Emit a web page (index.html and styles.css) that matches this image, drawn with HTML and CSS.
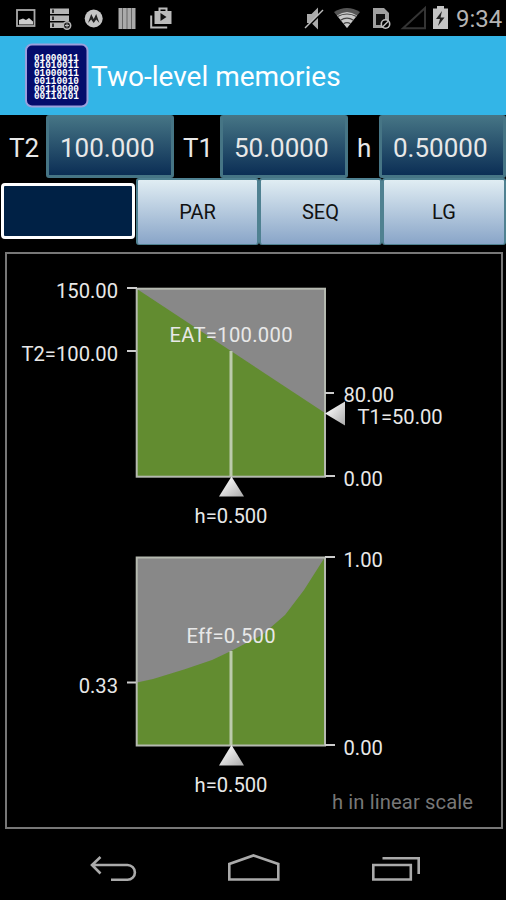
FILE: index.html
```html
<!DOCTYPE html>
<html lang="en">
<head>
    <meta charset="UTF-8">
    <meta name="viewport" content="width=device-width, initial-scale=1.0">
    <title>Two-level memories</title>
    <link rel="stylesheet" href="styles.css">
</head>
<body>
    <div class="status-bar">
        <svg class="status-icons" width="506" height="36" viewBox="0 0 506 36">
            <!-- picture -->
            <rect x="17" y="10" width="17.5" height="16" fill="none" stroke="#aaa" stroke-width="1.8"/>
            <path d="M19 24.500V20l4-1.500 3 1.500 3-2 4 3.500v3z" fill="#ccc"/>
            <!-- storage -->
            <path d="M50 8.500h19v5.500H50zM50 15.500h19V21H50zM50 22.500h14V28H50z" fill="#b5b5b5"/>
            <path d="M53 9.500v3.500M53 16.500V20M53 23.500V27" stroke="#333" stroke-width="2"/>
            <circle cx="67" cy="25.500" r="3.700" fill="#222" stroke="#b5b5b5" stroke-width="1.500"/>
            <path d="M67 23.500v4M65 25.500h4" stroke="#b5b5b5"/>
            <!-- motorola -->
            <circle cx="93.700" cy="18.500" r="9" fill="#c4c4c4"/>
            <path d="M88 23l3.200-9 2.500 5 2.500-5 3.200 9-3.200-3.500-2.500 3.500-2.500-3.500z" fill="#222"/>
            <!-- bars -->
            <path d="M118.500 8h17v21h-17z" fill="#aaa"/>
            <path d="M122.500 8v21M127 8v21M131.500 8v21" stroke="#666"/>
            <!-- play store -->
            <path d="M154.500 11h17v13h-17z" fill="#bbb"/>
            <path d="M159.500 12V8.500h7V12M151.200 15.500v12h16" fill="none" stroke="#bbb" stroke-width="2"/>
            <path d="M160.500 13v8l6-4z" fill="#111"/>
            <!-- muted -->
            <path d="M307 14h4.500l6.500-6.500v22L311.500 23H307z" fill="#aaa"/>
            <path d="M305.500 29l18-18" stroke="#000" stroke-width="2"/>
            <path d="M305 28l18-18" stroke="#bbb" stroke-width="1.500"/>
            <!-- wifi -->
            <path d="M334 12q13-8 26 0L347 28z" fill="#555"/>
            <path d="M337 15.500q10-7 20 0L347 28z" fill="#c8c8c8"/>
            <path d="M337.500 16.500q9.500-5 19 0M340.500 20.200q6.500-4 13 0M343.500 23.700q3.500-2 7 0" fill="none" stroke="#444" stroke-width="1.200"/>
            <!-- no sim -->
            <path d="M373 8h11l5 5v15h-16z" fill="#a0a0a0"/>
            <path d="M376 14h9v11h-9z" fill="#111"/>
            <circle cx="385.500" cy="24" r="4.200" fill="#000" stroke="#c0c0c0" stroke-width="1.600"/>
            <path d="M382.500 27l6-6" stroke="#c0c0c0" stroke-width="1.500"/>
            <!-- signal -->
            <path d="M403 28.200L425 8v20.200z" fill="none" stroke="#343434" stroke-width="2"/>
            <!-- battery -->
            <path d="M433 8.500h4V6h7v2.500h4V29h-15z" fill="#c4c4c4"/>
            <path d="M442 11l-6 8h4l-2 7 6.500-8.500h-4z" fill="#222"/>
            <text class="clock" x="456" y="26.500">9:34</text>
        </svg>
    </div>

    <header class="title-bar">
        <svg class="logo" width="64" height="66" viewBox="0 0 64 66">
            <rect x="1" y="1.500" width="61.500" height="62" rx="6" fill="#040c6c" stroke="#9b9fdc" stroke-width="2"/>
            <g class="bits">
                <text x="9" y="17.500" textLength="45" lengthAdjust="spacingAndGlyphs">01000011</text>
                <text x="9" y="24.800" textLength="45" lengthAdjust="spacingAndGlyphs">01010011</text>
                <text x="9" y="33" textLength="45" lengthAdjust="spacingAndGlyphs">01000011</text>
                <text x="9" y="40.800" textLength="45" lengthAdjust="spacingAndGlyphs">00110010</text>
                <text x="9" y="48.600" textLength="45" lengthAdjust="spacingAndGlyphs">00110000</text>
                <text x="9" y="56.400" textLength="45" lengthAdjust="spacingAndGlyphs">00110101</text>
            </g>
        </svg>
        <h1>Two-level memories</h1>
    </header>

    <div class="inputs">
        <span class="label">T2</span>
        <div class="field">100.000</div>
        <span class="label">T1</span>
        <div class="field">50.0000</div>
        <span class="label">h</span>
        <div class="field">0.50000</div>
    </div>

    <div class="buttons">
        <div class="selected"></div>
        <button type="button">PAR</button>
        <button type="button">SEQ</button>
        <button type="button">LG</button>
    </div>

    <main class="panel">
        <svg class="chart" width="494" height="573" viewBox="7 254 494 573">
            <defs>
                <linearGradient id="knob" x1="0" y1="0" x2="1" y2="1">
                    <stop offset="0.300" stop-color="#eee"/>
                    <stop offset="1" stop-color="#aaa"/>
                </linearGradient>
            </defs>

            <!-- effective access time -->
            <rect x="136.500" y="288.500" width="188.500" height="188.500" fill="#888"/>
            <path d="M137 289L325 413V476H137z" fill="#628c30"/>
            <rect class="frame" x="136.700" y="288.700" width="188.300" height="188"/>
            <path class="needle" d="M231 351V476"/>
            <path class="tick" d="M127 288h10M127 351h9M325 393h9M325 476h10"/>
            <path d="M231.500 476.500l12.500 20h-25z" fill="url(#knob)"/>
            <path d="M325 413.500l20-12v24z" fill="url(#knob)"/>
            <text class="end" x="118" y="297.500">150.00</text>
            <text class="end" x="118" y="360.500">T2=100.00</text>
            <text class="mid" x="231" y="341.500" textLength="123">EAT=100.000</text>
            <text x="343.500" y="402">80.00</text>
            <text x="357.500" y="423.500">T1=50.00</text>
            <text x="343.500" y="485.500">0.00</text>
            <text class="mid" x="231" y="522.500">h=0.500</text>

            <!-- efficiency -->
            <rect x="136.500" y="557.500" width="188.500" height="188.500" fill="#888"/>
            <path d="M137 682.500L153 679 184 669.500 212 660 231 651 262 635 285 615 304 590 325 557V745H137z" fill="#628c30"/>
            <rect class="frame" x="136.700" y="557.500" width="188.300" height="188"/>
            <path class="needle" d="M231 651V745"/>
            <path class="tick" d="M127 682.500h9M325 557h10M325 745h10"/>
            <path d="M231.500 745l12.500 20.500h-25z" fill="url(#knob)"/>
            <text class="end" x="118" y="692.500">0.33</text>
            <text class="mid" x="231" y="642.500" textLength="89">Eff=0.500</text>
            <text x="343.500" y="567">1.00</text>
            <text x="343.500" y="755">0.00</text>
            <text class="mid" x="231" y="791.500">h=0.500</text>

            <text class="note" x="332" y="809" textLength="141">h in linear scale</text>
        </svg>
    </main>

    <nav class="nav-bar">
        <svg width="506" height="71" viewBox="0 829 506 71">
            <g fill="none" stroke="#aaa" stroke-width="2.600">
                <path d="M111 879.800h16.500a7.400 7.400 0 0 0 0-14.800H92M100.500 857l-8.500 8 8.500 8.500"/>
                <path d="M229.300 879.500V864l24.200-8.500L278.300 864v15.500z"/>
                <path d="M373.300 865h37.500v14.500h-37.500zM382.500 858.300h36.200V874"/>
            </g>
        </svg>
    </nav>
</body>
</html>
```
FILE: styles.css
```css
body {
    margin: 0;
    background-color: #000;
    color: #e8e8e8;
    font-family: Roboto, sans-serif;
    height: 900px;
    overflow: hidden;
}

svg {
    display: block;
}

.status-bar {
    height: 36px;
}

.clock {
    font-size: 24px;
    fill: #b4b4b4;
}

.title-bar {
    display: flex;
    align-items: center;
    height: 79px;
    padding-left: 25px;
    background-color: #33b5e7;
}

.logo {
    margin-right: 2px;
}

.bits {
    font-family: "Liberation Mono", monospace;
    font-size: 10px;
    font-weight: bold;
    fill: #fff;
}

h1 {
    margin: 2px 0 0;
    font-size: 28px;
    font-weight: 400;
    color: #fff;
}

.inputs {
    display: grid;
    grid-template-columns: 46px 128px 46px 128px 31px 127px;
    grid-template-rows: 63px;
    height: 63px;
}

.label {
    padding-left: 9px;
    font-size: 26px;
    line-height: 66px;
}

.field {
    box-sizing: border-box;
    height: 63px;
    padding-left: 11px;
    border: 3px solid #467585;
    border-top-width: 1px;
    border-radius: 3px;
    background: linear-gradient(#467585, #0b2e55);
    font-size: 26px;
    line-height: 64px;
}

.buttons {
    display: grid;
    grid-template-columns: 136px 123px 123px 124px;
    height: 67px;
}

.selected {
    margin: 5px 1px 6px 1px;
    border: 3px solid #fff;
    border-radius: 4px;
    background-color: #002145;
}

button {
    padding: 0;
    border: 2px solid #4f8191;
    border-bottom-width: 1px;
    border-radius: 3px;
    background: linear-gradient(#e0edf3, #89a5c8);
    color: #111;
    font-family: inherit;
    font-size: 20px;
}

.panel {
    box-sizing: border-box;
    width: 498px;
    height: 577px;
    margin: 7px 0 0 5px;
    border: 2px solid #777;
}

.chart text {
    font-size: 20.2px;
    fill: #e8e8e8;
}

.chart .end {
    text-anchor: end;
}

.chart .mid {
    text-anchor: middle;
}

.chart .note {
    fill: #777;
}

.frame {
    fill: none;
    stroke: #b5b9b0;
    stroke-width: 2;
}

.needle {
    stroke: #bccbac;
    stroke-width: 3;
}

.tick {
    stroke: #ccc;
    stroke-width: 2;
}

.nav-bar {
    height: 71px;
}
```
